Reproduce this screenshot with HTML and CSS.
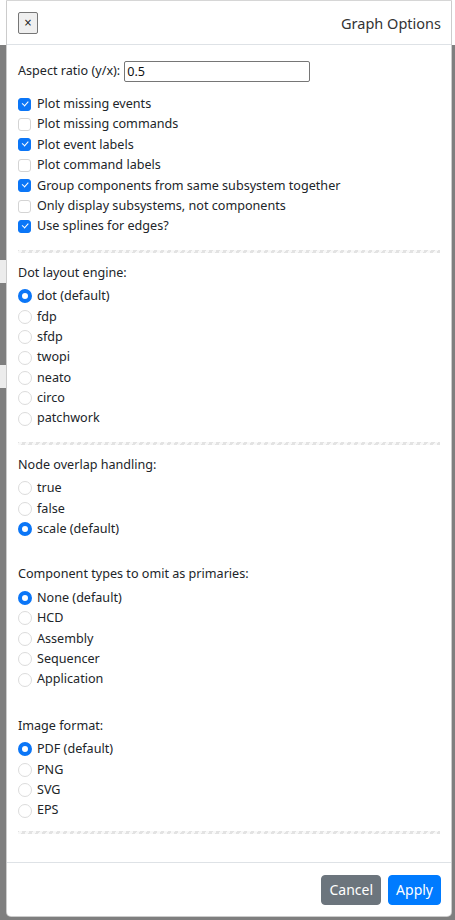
FILE: index.html
```html
<!DOCTYPE html>
<html>
<head>
<meta charset="utf-8">
<link rel="stylesheet" href="styles.css">
</head>
<body>
<div class="modal">
  <div class="modal-header">
    <button class="close">×</button>
    <h5 class="title">Graph Options</h5>
  </div>
  <div class="modal-body">
    <div class="aspect">
      <label class="aspect-label">Aspect ratio (y/x):</label>
      <input class="ratio" type="text" value="0.5">
    </div>
    <div class="options">
      <label class="item"><input type="checkbox" checked><span>Plot missing events</span></label>
      <label class="item"><input type="checkbox"><span>Plot missing commands</span></label>
      <label class="item"><input type="checkbox" checked><span>Plot event labels</span></label>
      <label class="item"><input type="checkbox"><span>Plot command labels</span></label>
      <label class="item"><input type="checkbox" checked><span>Group components from same subsystem together</span></label>
      <label class="item"><input type="checkbox"><span>Only display subsystems, not components</span></label>
      <label class="item"><input type="checkbox" checked><span>Use splines for edges?</span></label>
    </div>
    <div class="divider"></div>
    <div class="group">
      <div class="group-label">Dot layout engine:</div>
      <label class="item"><input type="radio" name="engine" checked><span>dot (default)</span></label>
      <label class="item"><input type="radio" name="engine"><span>fdp</span></label>
      <label class="item"><input type="radio" name="engine"><span>sfdp</span></label>
      <label class="item"><input type="radio" name="engine"><span>twopi</span></label>
      <label class="item"><input type="radio" name="engine"><span>neato</span></label>
      <label class="item"><input type="radio" name="engine"><span>circo</span></label>
      <label class="item"><input type="radio" name="engine"><span>patchwork</span></label>
    </div>
    <div class="divider"></div>
    <div class="group">
      <div class="group-label">Node overlap handling:</div>
      <label class="item"><input type="radio" name="overlap"><span>true</span></label>
      <label class="item"><input type="radio" name="overlap"><span>false</span></label>
      <label class="item"><input type="radio" name="overlap" checked><span>scale (default)</span></label>
    </div>
    <div class="divider faint first-faint"></div>
    <div class="group">
      <div class="group-label">Component types to omit as primaries:</div>
      <label class="item"><input type="radio" name="omit" checked><span>None (default)</span></label>
      <label class="item"><input type="radio" name="omit"><span>HCD</span></label>
      <label class="item"><input type="radio" name="omit"><span>Assembly</span></label>
      <label class="item"><input type="radio" name="omit"><span>Sequencer</span></label>
      <label class="item"><input type="radio" name="omit"><span>Application</span></label>
    </div>
    <div class="divider faint second-faint"></div>
    <div class="group">
      <div class="group-label">Image format:</div>
      <label class="item"><input type="radio" name="format" checked><span>PDF (default)</span></label>
      <label class="item"><input type="radio" name="format"><span>PNG</span></label>
      <label class="item"><input type="radio" name="format"><span>SVG</span></label>
      <label class="item"><input type="radio" name="format"><span>EPS</span></label>
    </div>
    <div class="divider last"></div>
  </div>
  <div class="modal-footer">
    <button class="btn btn-secondary">Cancel</button>
    <button class="btn btn-primary">Apply</button>
  </div>
</div>
</body>
</html>
```

FILE: styles.css
```css
html, body {
  margin: 0;
  padding: 0;
}
body {
  width: 455px;
  height: 920px;
  overflow: hidden;
  font-family: "Noto Sans", sans-serif;
  color: #212529;
  background:
    linear-gradient(#ffffff, #ffffff) 0 0 / 100% 45px no-repeat,
    linear-gradient(#ececec, #ececec) 0 260px / 6px 23px no-repeat,
    linear-gradient(#ececec, #ececec) 0 365px / 6px 23px no-repeat,
    #7f7f7f;
}
.modal {
  box-sizing: border-box;
  width: 446px;
  margin-left: 6px;
  background: #fff;
  border: 1px solid rgba(0, 0, 0, 0.2);
  border-top-color: #d6d6d6;
  border-radius: 0 0 5px 5px;
  display: flex;
  flex-direction: column;
}
.modal-header {
  display: flex;
  align-items: center;
  justify-content: space-between;
  height: 43px;
  padding: 0 10px 0 11px;
  border-bottom: 1px solid #dee2e6;
}
.close {
  width: 20px;
  height: 22px;
  padding: 0;
  font-family: "DejaVu Sans", sans-serif;
  font-size: 10px;
  line-height: 20px;
  color: #111;
  background: #efefef;
  border: 1px solid #767676;
  border-radius: 2px;
}
.title {
  margin: 0;
  font-size: 14.5px;
  font-weight: 400;
  color: #333;
}
.modal-body {
  padding: 16px 11px 0 11px;
  font-size: 12.6px;
  line-height: 20.4px;
}
.aspect {
  display: flex;
  align-items: center;
  height: 20px;
}
.aspect-label {
  margin-right: 4px;
}
.ratio {
  box-sizing: border-box;
  width: 186px;
  height: 21px;
  padding: 0 2px;
  font-family: "Noto Sans", sans-serif;
  font-size: 12.6px;
  color: #111;
  border: 1px solid #767676;
  border-radius: 2px;
}
.options {
  margin-top: 13px;
}
.item {
  display: flex;
  align-items: center;
  height: 20.4px;
}
.item input {
  appearance: none;
  -webkit-appearance: none;
  box-sizing: border-box;
  flex: none;
  width: 13px;
  height: 13px;
  margin: 0 6px 0 0;
  border: 1px solid #d4d4d4;
  background: #fff;
  position: relative;
}
.item input[type="checkbox"] {
  border-radius: 3px;
}
.item input[type="checkbox"]:checked {
  background: #0b76f7;
  border-color: #0b76f7;
}
.item input[type="checkbox"]:checked::after {
  content: "";
  position: absolute;
  left: 3px;
  top: 2px;
  width: 5px;
  height: 2.5px;
  border-left: 1.6px solid #fff;
  border-bottom: 1.6px solid #fff;
  transform: rotate(-48deg);
}
.item input[type="radio"] {
  border-radius: 50%;
  width: 14px;
  height: 14px;
  margin-right: 5px;
  border-color: #dcdcdc;
}
.item input[type="radio"]:checked {
  border: 4px solid #0b76f7;
}
.divider {
  height: 3px;
  margin: 13px 0 10px;
  background: repeating-linear-gradient(-60deg, #e3e3e3 0 3px, #f8f8f8 3px 6px);
}
.divider.faint {
  background: transparent;
}
.divider.first-faint {
  margin: 13px 0 9px;
}
.divider.second-faint {
  margin: 13px 0 10px;
}
.divider.last {
  margin: 10px 0 28px;
}
.group-label {
  margin-bottom: 3px;
}
.modal-footer {
  display: flex;
  justify-content: flex-end;
  gap: 7px;
  padding: 12px 10px 11px;
  border-top: 1px solid #dee2e6;
}
.btn {
  height: 30px;
  padding: 0 7px;
  font-family: "Noto Sans", sans-serif;
  font-size: 14px;
  color: #fff;
  border: 1px solid transparent;
  border-radius: 4px;
}
.btn-secondary {
  background: #6c757d;
  border-color: #6c757d;
}
.btn-primary {
  background: #007bff;
  border-color: #007bff;
}
```
